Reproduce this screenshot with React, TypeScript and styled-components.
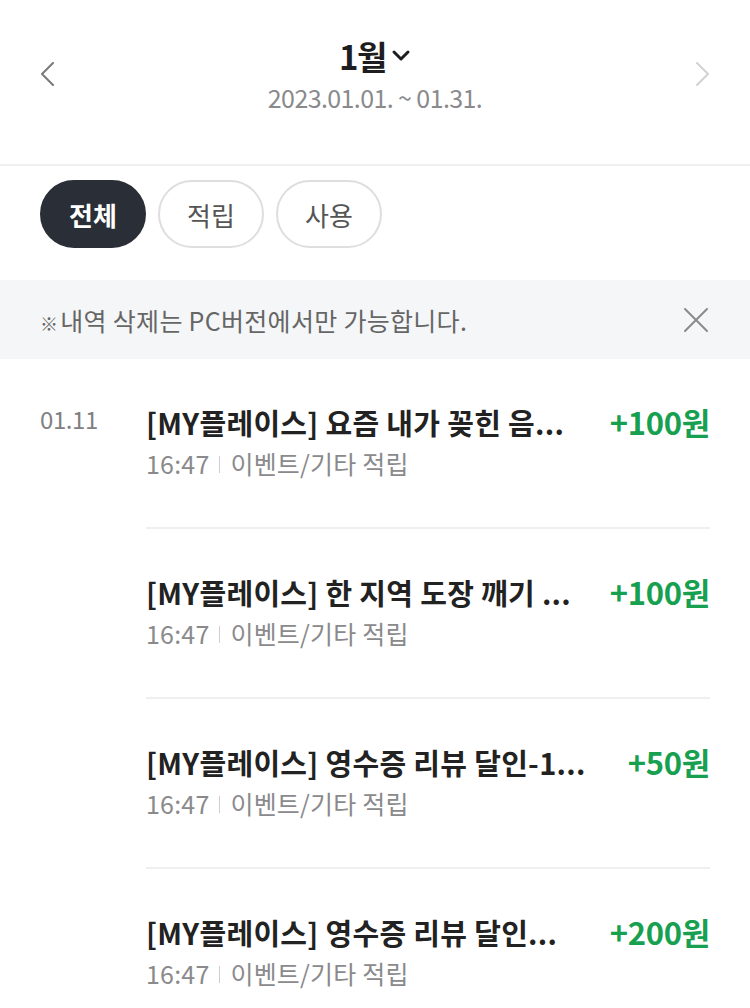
import React from 'react';
import styled, { createGlobalStyle } from 'styled-components';

const GlobalStyle = createGlobalStyle`
  html, body {
    margin: 0;
    padding: 0;
    background: #ffffff;
  }
  body {
    font-family: 'Noto Sans CJK KR', 'Noto Sans', 'Liberation Sans', sans-serif;
    -webkit-font-smoothing: antialiased;
  }
`;

const Page = styled.div`
  width: 750px;
  height: 1008px;
  overflow: hidden;
  background: #fff;
`;

const Header = styled.header`
  height: 164px;
  border-bottom: 2px solid #f0f0f2;
  display: flex;
  align-items: flex-start;
  justify-content: space-between;
  padding: 0 40px;
`;

const NavButton = styled.button<{ $dim?: boolean }>`
  border: none;
  background: none;
  padding: 0;
  margin-top: 62px;
  width: 16px;
  height: 24px;
  display: flex;
  color: ${({ $dim }) => ($dim ? '#d2d2d4' : '#7a7a7c')};
`;

const MonthBlock = styled.div`
  display: flex;
  flex-direction: column;
  align-items: center;
  padding-top: 36px;
`;

const MonthTitle = styled.div`
  display: flex;
  align-items: center;
  gap: 5px;
  font-size: 33px;
  font-weight: 700;
  color: #1e1e20;
  letter-spacing: -1.5px;
  line-height: 40px;
`;

const Period = styled.div`
  margin-top: 6px;
  font-size: 25px;
  color: #8a8a8c;
  letter-spacing: -0.6px;
  line-height: 30px;
`;

const Tabs = styled.div`
  display: flex;
  gap: 12px;
  padding: 14px 40px 32px;
`;

const Tab = styled.button<{ $active?: boolean }>`
  width: 106px;
  height: 68px;
  box-sizing: border-box;
  border-radius: 34px;
  border: 2px solid ${({ $active }) => ($active ? '#2a2f37' : '#dedede')};
  background: ${({ $active }) => ($active ? '#2a2f37' : '#fff')};
  color: ${({ $active }) => ($active ? '#fff' : '#555')};
  font-family: inherit;
  font-size: 26px;
  font-weight: ${({ $active }) => ($active ? 700 : 400)};
  letter-spacing: 0;
  padding: 0;
`;

const Notice = styled.div`
  height: 79px;
  background: #f5f6f8;
  display: flex;
  align-items: center;
  justify-content: space-between;
  padding: 0 42px 0 40px;
`;

const NoticeText = styled.span`
  font-size: 25px;
  color: #666;
  letter-spacing: 0.3px;
`;

const Mark = styled.span`
  font-size: 18px;
  margin-right: 2px;
`;

const CloseButton = styled.button`
  border: none;
  background: none;
  padding: 0;
  width: 24px;
  height: 24px;
  color: #8a8a8c;
  display: flex;
`;

const List = styled.ul`
  list-style: none;
  margin: 0;
  padding: 0;
`;

const Item = styled.li`
  display: flex;
  padding: 0 40px;
`;

const DateCol = styled.div`
  width: 106px;
  flex-shrink: 0;
  padding-top: 42px;
  font-size: 24px;
  line-height: 36px;
  color: #808082;
  letter-spacing: -0.4px;
`;

const Body = styled.div<{ $last?: boolean }>`
  flex: 1;
  min-width: 0;
  padding: 45px 0 46px;
  border-bottom: ${({ $last }) => ($last ? 'none' : '2px solid #efeff1')};
`;

const TopLine = styled.div`
  display: flex;
  align-items: center;
  justify-content: space-between;
  gap: 16px;
`;

const Title = styled.div`
  font-size: 29px;
  font-weight: 700;
  color: #222;
  line-height: 36px;
  letter-spacing: 0.3px;
  white-space: nowrap;
`;

const Amount = styled.div`
  flex-shrink: 0;
  font-size: 31px;
  font-weight: 700;
  color: #17a04f;
  letter-spacing: -0.3px;
  line-height: 36px;
`;

const SubLine = styled.div`
  margin-top: 5px;
  display: flex;
  align-items: center;
  font-size: 25px;
  line-height: 36px;
  color: #8a8a8c;
  letter-spacing: 0.2px;
`;

const Divider = styled.span`
  width: 1px;
  height: 17px;
  background: #cfcfd1;
  margin: 2px 10px 0;
`;

const ChevronLeft = () => (
  <svg width="16" height="24" viewBox="0 0 16 24" fill="none">
    <path d="M13 1 L2 12 L13 23" stroke="currentColor" strokeWidth="2" strokeLinecap="round" strokeLinejoin="round" />
  </svg>
);

const ChevronRight = () => (
  <svg width="16" height="24" viewBox="0 0 16 24" fill="none">
    <path d="M3 1 L14 12 L3 23" stroke="currentColor" strokeWidth="2" strokeLinecap="round" strokeLinejoin="round" />
  </svg>
);

const ChevronDown = () => (
  <svg width="20" height="14" viewBox="0 0 20 14" fill="none">
    <path d="M3 3 L10 10 L17 3" stroke="#1e1e20" strokeWidth="3" strokeLinecap="round" strokeLinejoin="round" />
  </svg>
);

const CloseIcon = () => (
  <svg width="24" height="24" viewBox="0 0 24 24" fill="none">
    <path d="M1 1 L23 23 M23 1 L1 23" stroke="currentColor" strokeWidth="2" strokeLinecap="round" />
  </svg>
);

const rows = [
  { date: '01.11', title: '[MY플레이스] 요즘 내가 꽂힌 음...', amount: '+100원', time: '16:47', kind: '이벤트/기타 적립' },
  { date: '', title: '[MY플레이스] 한 지역 도장 깨기 ...', amount: '+100원', time: '16:47', kind: '이벤트/기타 적립' },
  { date: '', title: '[MY플레이스] 영수증 리뷰 달인-1...', amount: '+50원', time: '16:47', kind: '이벤트/기타 적립' },
  { date: '', title: '[MY플레이스] 영수증 리뷰 달인...', amount: '+200원', time: '16:47', kind: '이벤트/기타 적립' },
];

export default function App() {
  return (
    <Page>
      <GlobalStyle />
      <Header>
        <NavButton aria-label="이전 달">
          <ChevronLeft />
        </NavButton>
        <MonthBlock>
          <MonthTitle>
            1월
            <ChevronDown />
          </MonthTitle>
          <Period>2023.01.01. ~ 01.31.</Period>
        </MonthBlock>
        <NavButton $dim aria-label="다음 달">
          <ChevronRight />
        </NavButton>
      </Header>

      <Tabs>
        <Tab $active>전체</Tab>
        <Tab>적립</Tab>
        <Tab>사용</Tab>
      </Tabs>

      <Notice>
        <NoticeText>
          <Mark>※</Mark>내역 삭제는 PC버전에서만 가능합니다.
        </NoticeText>
        <CloseButton aria-label="닫기">
          <CloseIcon />
        </CloseButton>
      </Notice>

      <List>
        {rows.map((row, i) => (
          <Item key={i}>
            <DateCol>{row.date}</DateCol>
            <Body $last={i === rows.length - 1}>
              <TopLine>
                <Title>{row.title}</Title>
                <Amount>{row.amount}</Amount>
              </TopLine>
              <SubLine>
                {row.time}
                <Divider />
                {row.kind}
              </SubLine>
            </Body>
          </Item>
        ))}
      </List>
    </Page>
  );
}
